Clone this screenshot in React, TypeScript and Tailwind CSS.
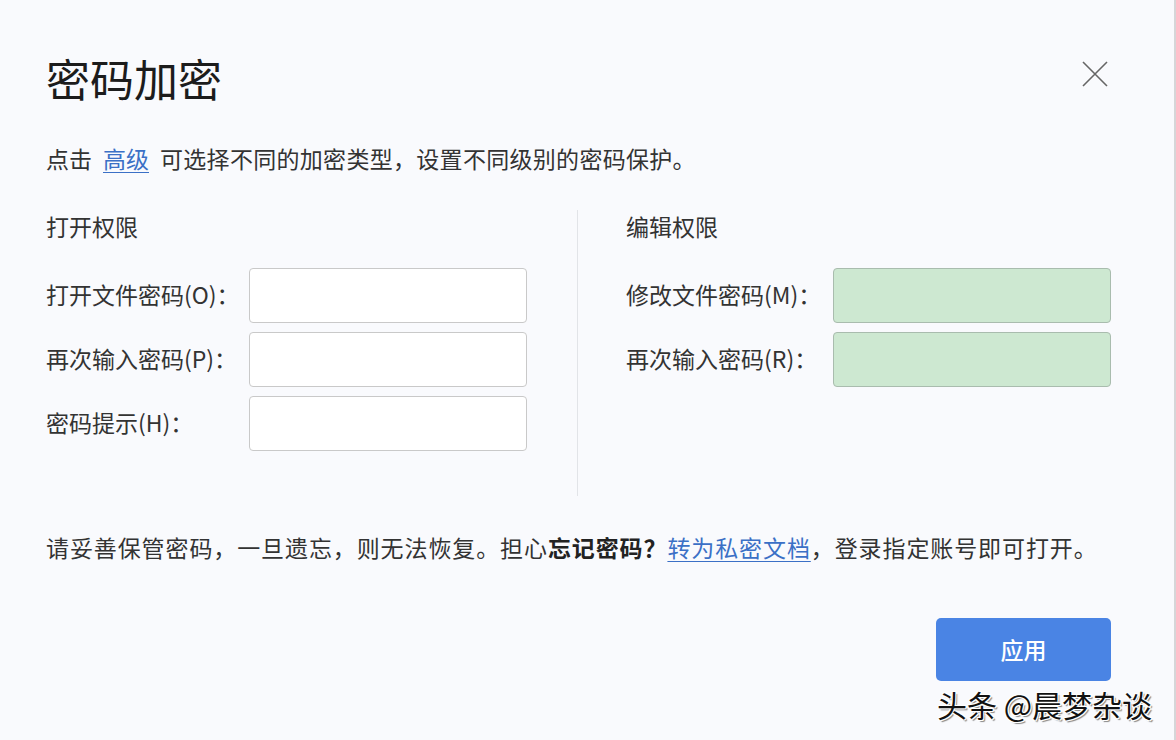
import React from "react";

const font = { fontFamily: '"Microsoft YaHei", "Noto Sans CJK SC", "Noto Sans", sans-serif' };

function Field({ label, green }: { label: string; green?: boolean }) {
  return (
    <div className="flex items-center h-[55px]">
      <div
        className={
          (green ? "w-[207px]" : "w-[203px]") +
          " text-[23px] leading-[30px] -mt-[3px] text-[#333] whitespace-nowrap"
        }
      >
        {label}
      </div>
      <div
        className={
          green
            ? "w-[278px] h-[55px] rounded-[4px] border border-[#a9bcae] bg-[#cde8d1]"
            : "w-[278px] h-[55px] rounded-[4px] border border-[#c9c9c9] bg-white"
        }
      />
    </div>
  );
}

export default function App() {
  return (
    <div
      style={font}
      className="relative w-[1176px] h-[740px] bg-[#f9fafd] border-r-2 border-[#d6d6d8] overflow-hidden [text-spacing-trim:space-all]"
    >
      <div className="flex flex-col pl-[46px]">
        <div className="flex justify-between items-start mt-[56px] pr-[66px]">
          <div className="h-[44px] leading-[44px] text-[44px] text-[#1c1c1c]">密码加密</div>
          <svg width="26" height="26" viewBox="0 0 26 26" className="mt-[5px]">
            <path d="M1 1 L25 25 M25 1 L1 25" stroke="#666" strokeWidth="1.6" />
          </svg>
        </div>
        <div className="mt-[43px] text-[23px] leading-[30px] text-[#333] flex">
          <span>点击</span>
          <span className="mx-[11px] text-[#3b70c6] underline underline-offset-[4px] decoration-1">高级</span>
          <span className="tracking-[0.3px]">可选择不同的加密类型，设置不同级别的密码保护。</span>
        </div>
        <div className="mt-[37px] h-[286px] flex">
          <div className="w-[481px] pt-[1px] flex flex-col">
            <div className="text-[23px] leading-[30px] text-[#333]">打开权限</div>
            <div className="mt-[27px] flex flex-col gap-[9px]">
              <Field label="打开文件密码(O)：" />
              <Field label="再次输入密码(P)：" />
              <Field label="密码提示(H)：" />
            </div>
          </div>
          <div className="ml-[50px] w-px bg-[#e2e4e8]" />
          <div className="ml-[48px] pt-[1px] flex flex-col">
            <div className="text-[23px] leading-[30px] text-[#333]">编辑权限</div>
            <div className="mt-[27px] flex flex-col gap-[9px]">
              <Field label="修改文件密码(M)：" green />
              <Field label="再次输入密码(R)：" green />
            </div>
          </div>
        </div>
        <div className="mt-[36px] text-[23px] leading-[30px] text-[#333] flex whitespace-nowrap tracking-[0.9px]">
          <span>请妥善保管密码，一旦遗忘，则无法恢复。担心</span>
          <span className="font-bold text-[#222]">忘记密码？</span>
          <span className="text-[#3b70c6] underline underline-offset-[4px] decoration-1">转为私密文档</span>
          <span>，登录指定账号即可打开。</span>
        </div>
        <div className="mt-[56px] flex justify-end pr-[63px]">
          <div className="w-[175px] h-[63px] rounded-[5px] bg-[#4a84e4] flex items-center justify-center text-white text-[23px] font-medium">
            应用
          </div>
        </div>
      </div>
      <div className="absolute left-[937px] top-[686px] text-[30px] leading-[36px] text-[#111] whitespace-nowrap [text-shadow:1px_1px_0_#fff,-1px_-1px_0_#fff,1px_-1px_0_#fff,-1px_1px_0_#fff,2px_2px_1px_#888]">
        头条 @晨梦杂谈
      </div>
    </div>
  );
}
